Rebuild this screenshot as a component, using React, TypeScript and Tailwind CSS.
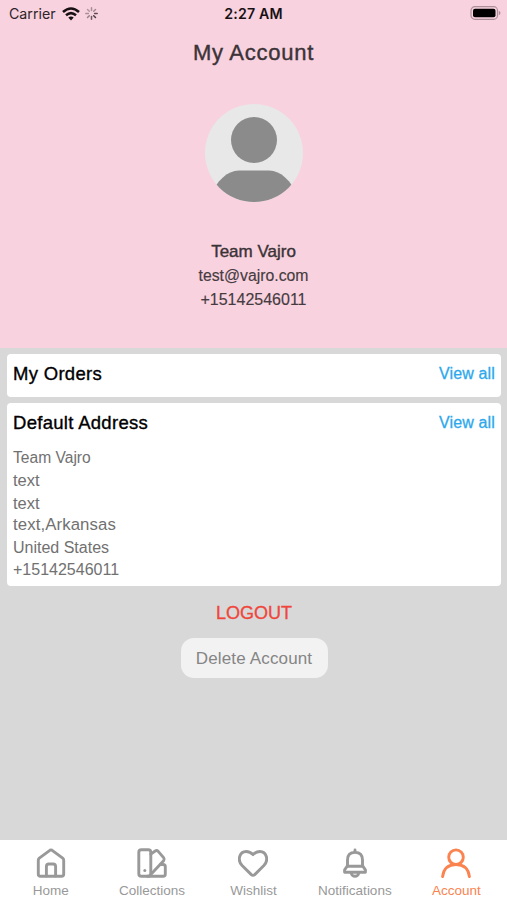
import { ReactNode } from "react";

const addressLines = [
  { text: "Team Vajro", className: "text-[15.6px]" },
  { text: "text", className: "text-[16.5px]" },
  { text: "text", className: "text-[16.5px]" },
  { text: "text,Arkansas", className: "text-[16.8px] tracking-[0.1px]" },
  { text: "United States", className: "text-[16px]" },
  { text: "+15142546011", className: "text-[16px]" },
];

const HomeIcon = () => (
  <>
    <path d="M2.3 12.2Q2.3 11 3.3 10.1L14.2 2.1Q15 1.6 15.8 2.1L26.7 10.1Q27.7 11 27.7 12.2V26Q27.7 28.3 25.4 28.3H4.6Q2.3 28.3 2.3 26Z" />
    <path d="M10.4 28V18.5Q10.4 16 12.9 16H17.1Q19.6 16 19.6 18.5V28" />
  </>
);

const CollectionsIcon = () => (
  <>
    <rect x="1.8" y="1.8" width="12" height="26.5" rx="2.6" />
    <path d="M13.8 6.2L18.2 3Q19.8 2 21.2 3.4L26.6 9.6Q27.8 11.2 26.6 12.8L13.3 27" />
    <path d="M23.5 16.5H26Q28.3 16.5 28.3 18.8V26Q28.3 28.3 26 28.3H10.5" />
    <circle cx="7.8" cy="22.5" r="1.5" fill="currentColor" stroke="none" />
  </>
);

const HeartIcon = () => (
  <path d="M15 27.4Q14.2 27.4 13.3 26.6L4.1 17.5C-1 12.2 1.4 3.5 8.2 3.5Q12 3.5 15 6.6Q18 3.5 21.8 3.5C28.6 3.5 31 12.2 25.9 17.5L16.7 26.6Q15.8 27.4 15 27.4Z" />
);

const BellIcon = () => (
  <>
    <path d="M15 2V4.4M7.5 18.2V12Q7.5 4.4 15 4.4T22.5 12V18.2" />
    <path d="M7.2 18.2H22.8L25.4 21.8V24.3H4.6V21.8Z" />
    <path d="M11.2 25Q12 28.3 15 28.3T18.8 25" />
  </>
);

const AccountIcon = () => (
  <>
    <circle cx="15" cy="9.2" r="7.3" />
    <path d="M1.6 28.6C2.6 20.2 8 16.6 15 16.6S27.4 20.2 28.4 28.6" />
  </>
);

const tabs: { label: string; icon: ReactNode; active?: boolean }[] = [
  { label: "Home", icon: <HomeIcon /> },
  { label: "Collections", icon: <CollectionsIcon /> },
  { label: "Wishlist", icon: <HeartIcon /> },
  { label: "Notifications", icon: <BellIcon /> },
  { label: "Account", icon: <AccountIcon />, active: true },
];

const StatusBar = () => (
  <div className="grid h-7 grid-cols-3 items-center pl-[9px] pr-[6px] font-['Inter',sans-serif] text-[#171114]">
    <div className="flex items-center">
      <span className="w-[53px] text-[14.2px] text-[#2e2429]">Carrier</span>
      <svg width="18" height="14" viewBox="0 0 18 14" fill="none">
        <path d="M1 5Q9-2 17 5" stroke="currentColor" strokeWidth="2.6" />
        <path d="M4 8.3Q9 4 14 8.3" stroke="currentColor" strokeWidth="2.5" />
        <path d="M6.3 10.6Q9 8.4 11.7 10.6L9 13.4Z" fill="currentColor" />
      </svg>
      <svg
        className="ml-[5px]"
        width="13"
        height="13"
        viewBox="0 0 13 13"
        stroke="#4a3e43"
        strokeWidth="1.5"
        strokeLinecap="round"
      >
        <path d="M6.5 .8V3.4" opacity=".45" />
        <path d="M10.5 2.5L8.7 4.3" opacity=".5" />
        <path d="M12.2 6.5H9.6" opacity=".9" />
        <path d="M10.5 10.5L8.7 8.7" />
        <path d="M6.5 12.2V9.6" opacity=".8" />
        <path d="M2.5 10.5L4.3 8.7" opacity=".55" />
        <path d="M.8 6.5H3.4" opacity=".45" />
        <path d="M2.5 2.5L4.3 4.3" opacity=".4" />
      </svg>
    </div>
    <span className="pr-[3px] text-center text-[14.2px] font-semibold tracking-[0.15px]">
      2:27 AM
    </span>
    <svg
      className="-mt-[2px] justify-self-end"
      width="31"
      height="14"
      viewBox="0 0 31 14"
    >
      <rect
        x="1"
        y=".7"
        width="26.5"
        height="12.6"
        rx="3.8"
        fill="none"
        stroke="#ad8f9a"
        strokeWidth="1.2"
      />
      <rect x="3" y="2.7" width="22.5" height="8.6" rx="2" fill="#000" />
      <path d="M28.8 4.7Q30.5 5.5 30.5 7T28.8 9.3Z" fill="#ad8f9a" />
    </svg>
  </div>
);

const Avatar = () => (
  <svg width="98" height="98" viewBox="0 0 98 98">
    <defs>
      <clipPath id="avatar">
        <circle cx="49" cy="49" r="49" />
      </clipPath>
    </defs>
    <circle cx="49" cy="49" r="49" fill="#e8e8e8" />
    <g fill="#8b8b8b" clipPath="url(#avatar)">
      <circle cx="49" cy="36" r="23" />
      <path d="M5 98V92C12 77 22 66.5 34 66.5H64C76 66.5 86 77 93 92V98Z" />
    </g>
  </svg>
);

const CardHeader = ({ title }: { title: string }) => (
  <div className="flex h-10 items-center justify-between">
    <h2 className="text-[18.5px] tracking-[0.3px] text-black [-webkit-text-stroke:0.35px]">
      {title}
    </h2>
    <button className="text-[16px] tracking-[0.15px] text-[#2ca8ec] [-webkit-text-stroke:0.3px]">
      View all
    </button>
  </div>
);

const App = () => {
  return (
    <div className="flex h-[900px] w-[507px] flex-col overflow-hidden bg-[#d8d8d8] font-['Liberation_Sans',sans-serif]">
      <header className="h-[348px] bg-[#f8d2df]">
        <StatusBar />
        <h1 className="h-12 text-center text-[22px] leading-[49px] tracking-[0.75px] text-[#3b3337] [-webkit-text-stroke:0.4px]">
          My Account
        </h1>
        <div className="mt-[28px] flex flex-col items-center">
          <Avatar />
          <div className="mt-[38px] flex flex-col items-center leading-6 text-[#463b40]">
            <p className="text-[17px] text-[#3b3236] [-webkit-text-stroke:0.4px]">
              Team Vajro
            </p>
            <p className="text-[15.8px] [-webkit-text-stroke:0.15px]">
              test@vajro.com
            </p>
            <p className="text-[16px] [-webkit-text-stroke:0.15px]">
              +15142546011
            </p>
          </div>
        </div>
      </header>

      <main className="flex flex-1 flex-col pl-[7px] pr-[6px] pt-[6px]">
        <section className="h-[43px] rounded-[4px] bg-white px-[6px]">
          <CardHeader title="My Orders" />
        </section>
        <section className="mt-[6px] h-[183px] rounded-[4px] bg-white px-[6px]">
          <CardHeader title="Default Address" />
          <div className="mt-[4px] text-[#717171]">
            {addressLines.map((line, index) => (
              <p key={index} className={`h-[22.4px] leading-[22.4px] ${line.className}`}>
                {line.text}
              </p>
            ))}
          </div>
        </section>
        <div className="flex flex-col items-center">
          <button className="mt-[13px] h-7 text-[18px] text-[#ef463c] [-webkit-text-stroke:0.35px]">
            LOGOUT
          </button>
          <button className="mt-[11px] h-10 w-[147px] rounded-[13px] bg-[#f2f2f2] pt-px text-[17px] tracking-[0.15px] text-[#858585]">
            Delete Account
          </button>
        </div>
      </main>

      <nav className="grid h-[60px] grid-cols-5 bg-white">
        {tabs.map((tab) => (
          <button
            key={tab.label}
            className={`flex flex-col items-center pt-[8px] text-[13.5px] ${
              tab.active ? "text-[#fa8350]" : "text-[#999999]"
            }`}
          >
            <svg
              width="30"
              height="30"
              viewBox="0 0 30 30"
              fill="none"
              stroke="currentColor"
              strokeWidth="2.9"
              strokeLinecap="round"
              strokeLinejoin="round"
            >
              {tab.icon}
            </svg>
            <span className="mt-[5px] leading-4">{tab.label}</span>
          </button>
        ))}
      </nav>
    </div>
  );
};

export default App;
